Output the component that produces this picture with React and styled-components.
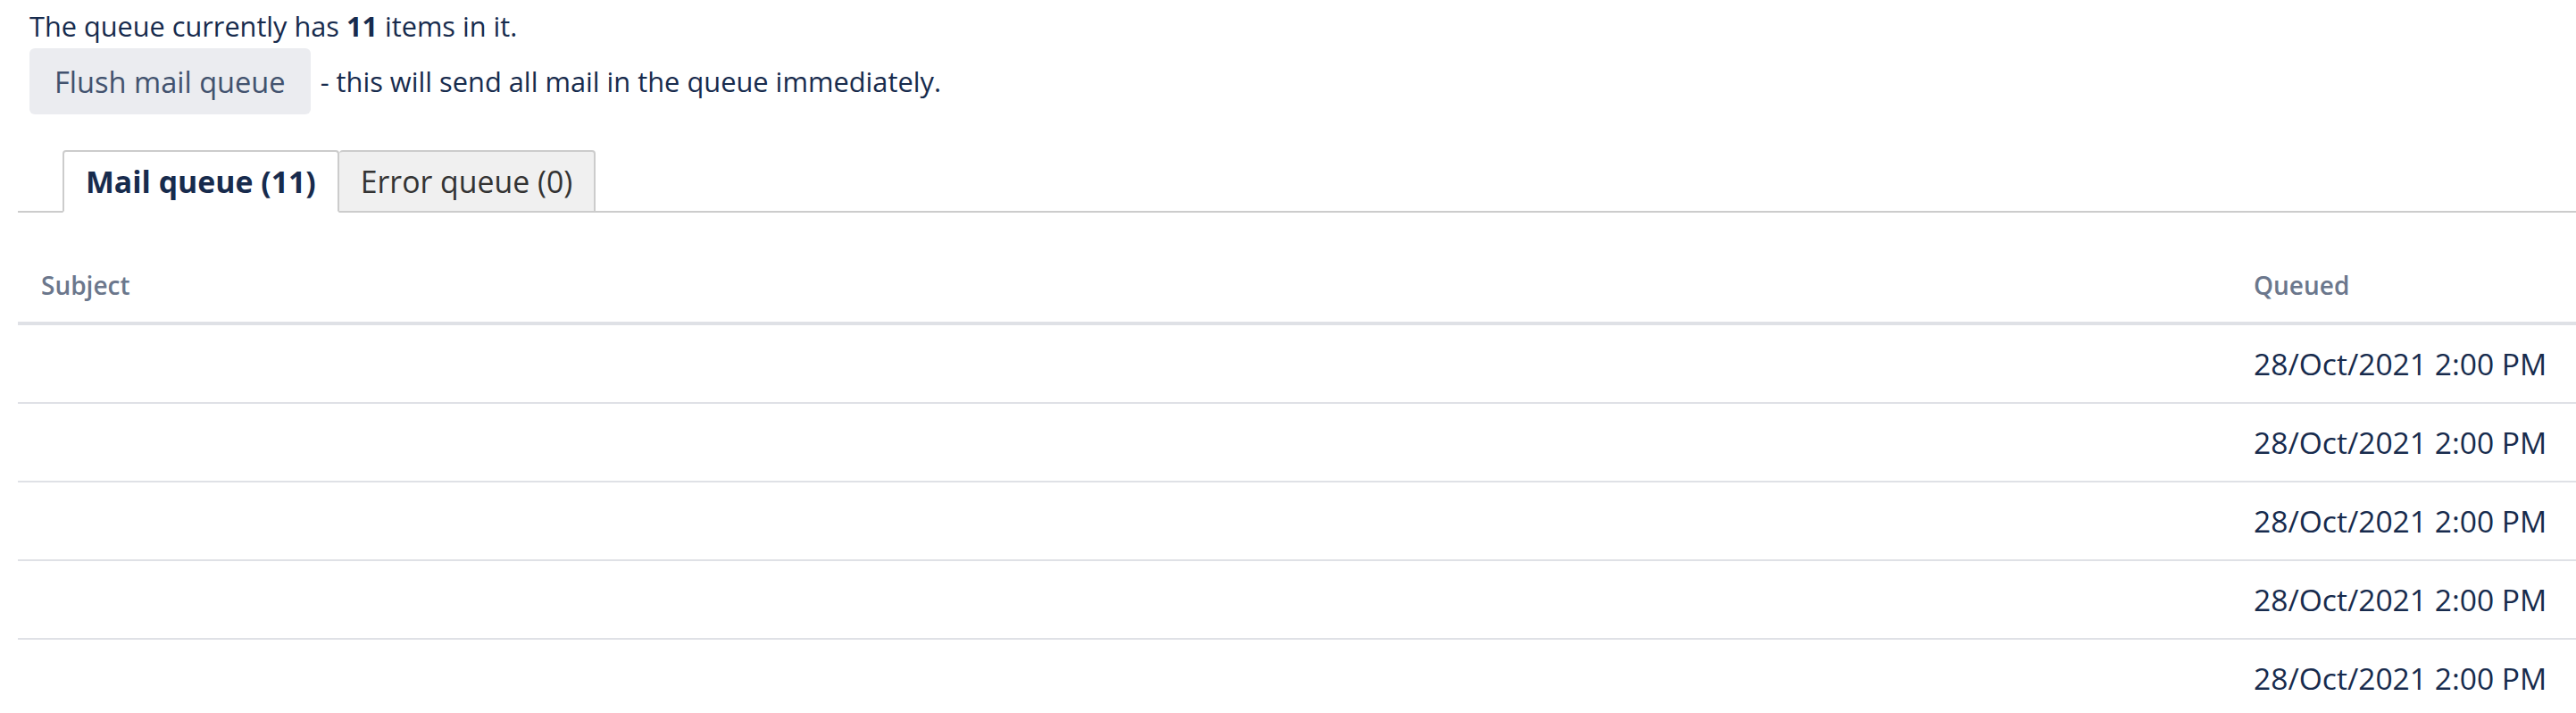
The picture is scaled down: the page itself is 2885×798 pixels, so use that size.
import React from 'react';
import styled, { createGlobalStyle } from 'styled-components';

const GlobalStyle = createGlobalStyle`
  html, body {
    margin: 0;
    padding: 0;
    background: #fff;
  }
  body {
    font-family: "Open Sans", "Noto Sans", sans-serif;
    color: #172b4d;
  }
`;

const Page = styled.div`
  padding-left: 20px;
  overflow: hidden;
`;

const Intro = styled.div`
  padding-left: 13px;
  font-size: 30.7px;
`;

const Summary = styled.p`
  margin: 0;
  padding-top: 7px;
  line-height: 44px;

  b {
    font-weight: 700;
  }
`;

const ActionRow = styled.div`
  display: flex;
  align-items: center;
  margin-top: 3px;
`;

const Button = styled.button`
  height: 74px;
  padding: 0 28px;
  border: none;
  border-radius: 6px;
  background: #ebecf0;
  color: #42526e;
  font-family: inherit;
  font-size: 32.6px;
  cursor: pointer;
`;

const Hint = styled.span`
  margin-left: 11px;
  font-size: 30.8px;
`;

const TabList = styled.div`
  display: flex;
  margin-top: 40px;
  padding-left: 50px;
  border-bottom: 2px solid #cccccc;
`;

const Tab = styled.div`
  box-sizing: border-box;
  height: 70px;
  margin-bottom: -2px;
  padding: 0 24px;
  display: flex;
  align-items: center;
  border: 2px solid #cccccc;
  border-radius: 4px 4px 0 0;
  font-size: 33.8px;
  background: ${p => (p.$active ? '#ffffff' : '#f0f0f0')};
  border-bottom-color: ${p => (p.$active ? '#ffffff' : '#cccccc')};
  color: ${p => (p.$active ? '#172b4d' : '#333333')};
  font-weight: ${p => (p.$active ? 700 : 400)};
  & + & {
    border-left: none;
  }
`;

const Table = styled.div`
  margin-top: 40px;
`;

const Row = styled.div`
  display: grid;
  grid-template-columns: 1fr 387px;
  align-items: center;
  height: ${p => (p.$head ? '82px' : '86px')};
  border-bottom: ${p => (p.$head ? '4px' : '2px')} solid #dfe1e6;
`;

const HeadCell = styled.div`
  padding-left: 26px;
  font-size: 28px;
  font-weight: 600;
  color: #6b778c;
`;

const Cell = styled.div`
  padding-left: 26px;
  font-size: 33.6px;
  color: #172b4d;
  white-space: nowrap;
`;

const items = Array.from({ length: 5 }, () => ({ subject: '', queued: '28/Oct/2021 2:00 PM' }));

export default function App() {
  return (
    <Page>
      <GlobalStyle />
      <Intro>
        <Summary>
          The queue currently has <b>11</b> items in it.
        </Summary>
        <ActionRow>
          <Button>Flush mail queue</Button>
          <Hint>- this will send all mail in the queue immediately.</Hint>
        </ActionRow>
      </Intro>

      <TabList>
        <Tab $active>Mail queue (11)</Tab>
        <Tab>Error queue (0)</Tab>
      </TabList>

      <Table>
        <Row $head>
          <HeadCell>Subject</HeadCell>
          <HeadCell>Queued</HeadCell>
        </Row>
        {items.map((item, i) => (
          <Row key={i}>
            <Cell>{item.subject}</Cell>
            <Cell>{item.queued}</Cell>
          </Row>
        ))}
      </Table>
    </Page>
  );
}
